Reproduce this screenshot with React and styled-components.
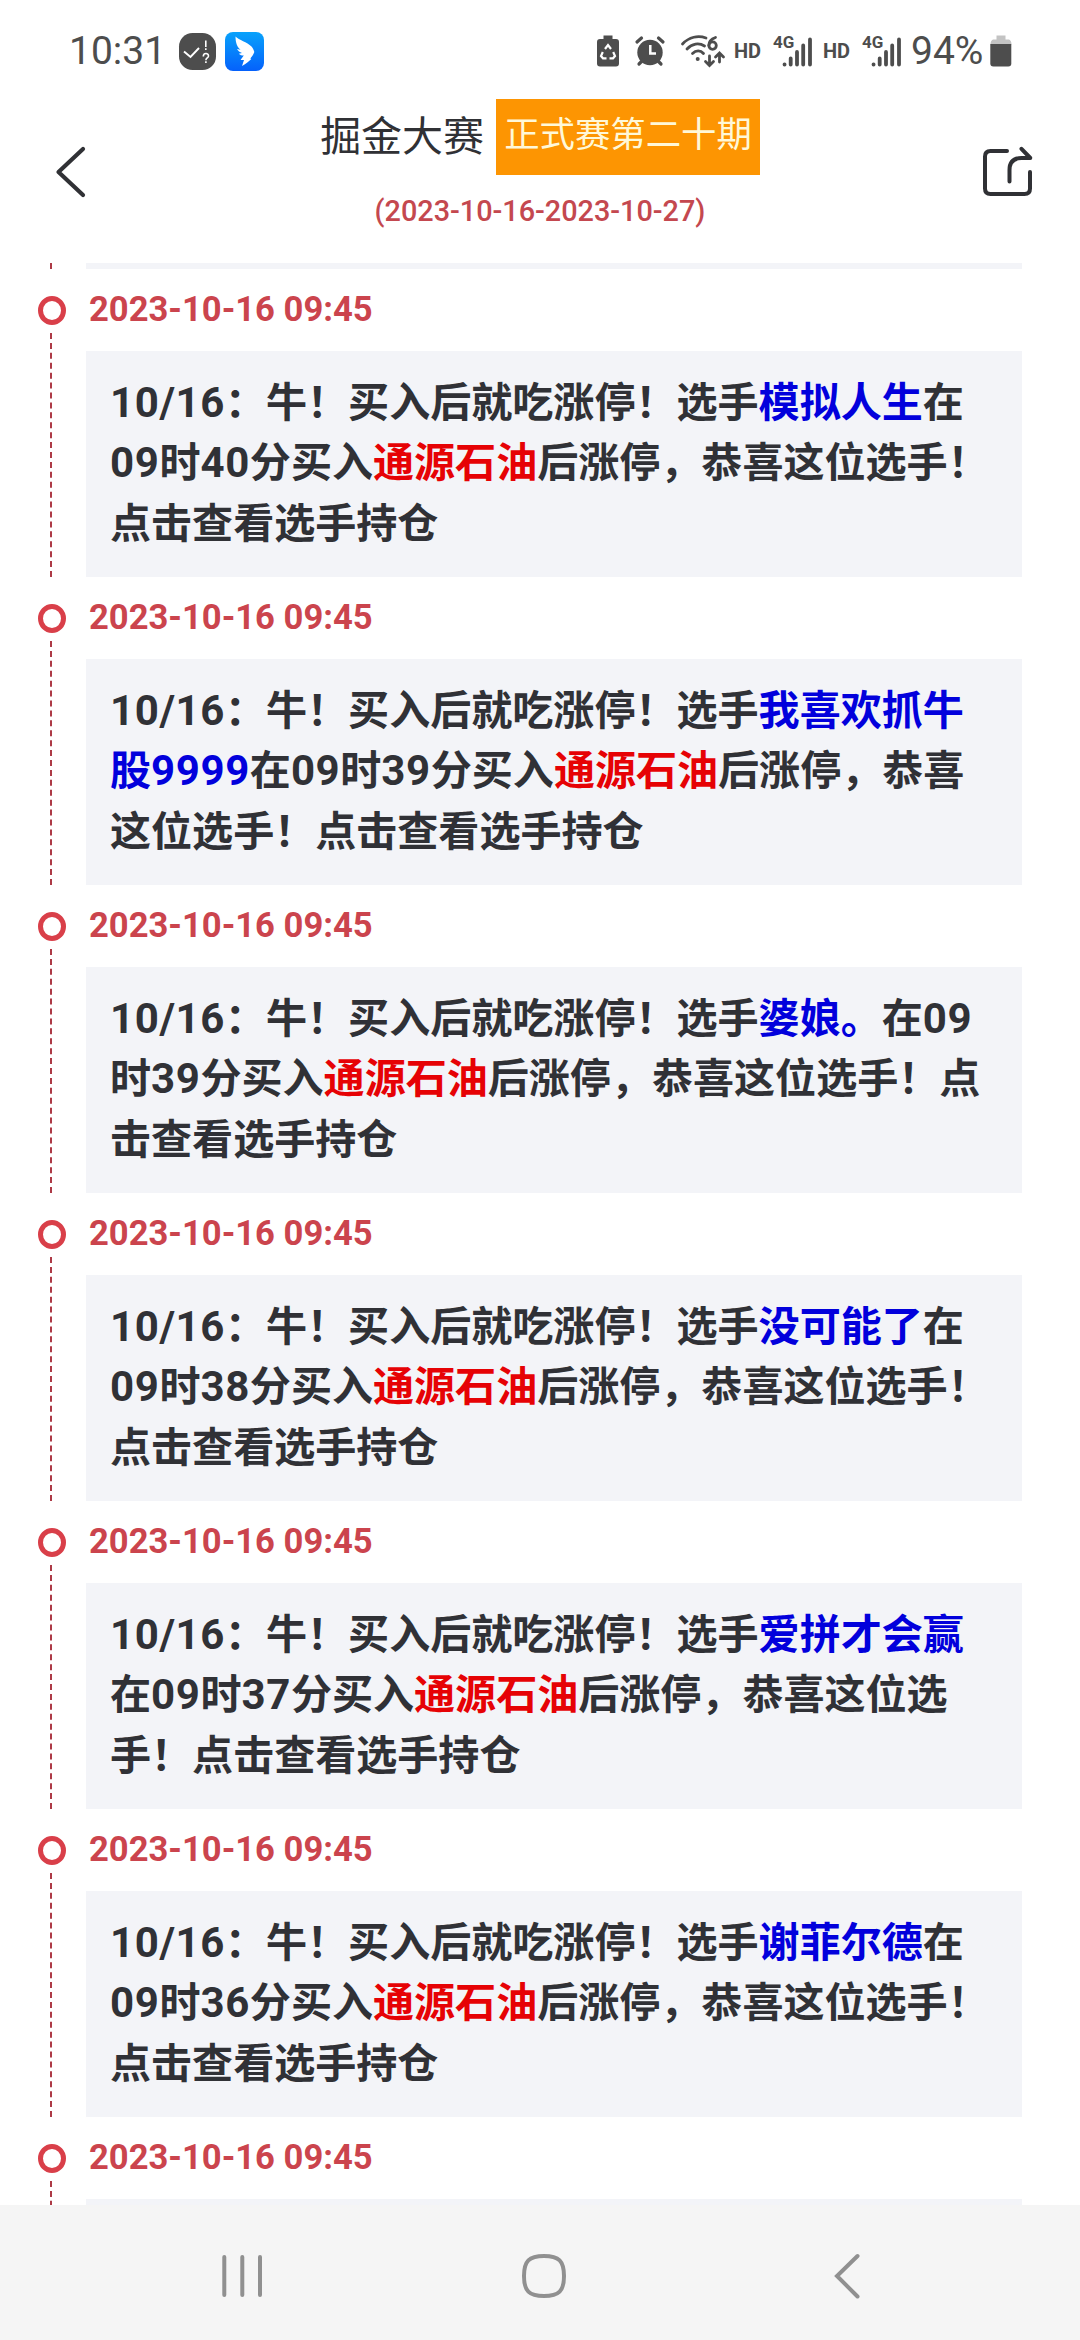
import React from "react";
import styled, { createGlobalStyle } from "styled-components";

const Global = createGlobalStyle`
  * { box-sizing: border-box; }
  body { margin: 0; background: #fff; font-family: Roboto, "Noto Sans CJK SC", sans-serif; }
  svg { overflow: visible; }
`;

const Screen = styled.div`
  width: 1080px;
  height: 2340px;
  display: flex;
  flex-direction: column;
  background: #fff;
  overflow: hidden;
`;

const StatusBar = styled.div`
  height: 99px;
  flex: none;
  display: flex;
  align-items: flex-start;
  justify-content: space-between;
  padding: 31px 68px 0 69px;
  color: #4d4d4d;
`;
const StatusGroup = styled.div`
  display: flex;
  align-items: center;
  height: 40px;
`;
const Spaced = styled.span`
  display: flex;
  flex: none;
  width: ${(p) => p.$w}px;
  margin-left: ${(p) => p.$gap || 0}px;
  white-space: nowrap;
`;
const Clock = styled.span`
  width: 110px;
  font-size: 39px;
  line-height: 40px;
`;
const Percent = styled.span`
  font-size: 39px;
  line-height: 40px;
`;
const Hd = styled.span`
  font-size: 20px;
  line-height: 24px;
  font-weight: 700;
`;
const NetworkTag = styled.span`
  width: 0;
  height: 32px;
  font-size: 17px;
  line-height: 14px;
  font-weight: 700;
`;

const Header = styled.header`
  height: 164px;
  flex: none;
  display: flex;
  justify-content: space-between;
  align-items: flex-start;
  padding: 0 46px;
`;
const IconButton = styled.button`
  display: flex;
  border: 0;
  padding: 0 0 0 ${(p) => p.$inset || 0}px;
  background: none;
  margin-top: ${(p) => p.$top}px;
  width: 54px;
  justify-content: ${(p) => p.$align};
`;
const Heading = styled.div`
  display: flex;
  flex-direction: column;
  align-items: center;
`;
const TitleRow = styled.div`
  display: flex;
  height: 76px;
`;
const Title = styled.h1`
  margin: 0 12px 0 0;
  font-size: 41px;
  font-weight: 400;
  line-height: 76px;
  color: #303135;
`;
const Badge = styled.span`
  height: 76px;
  padding: 0 8px;
  background: #fd9502;
  color: #fff8d8;
  font-size: 35.4px;
  line-height: 73px;
  white-space: nowrap;
`;
const Period = styled.div`
  margin-top: 18px;
  font-size: 28.8px;
  line-height: 36px;
  font-weight: 500;
  color: #c4484f;
`;

const Feed = styled.main`
  flex: 1;
  min-height: 0;
  overflow: hidden;
  display: flex;
  flex-direction: column;
`;
const Entry = styled.article`
  flex: none;
  height: ${(p) => (p.$tail ? 6 : 308)}px;
  display: grid;
  grid-template-columns: 48px 936px;
  padding-left: 38px;
`;
const Rail = styled.div`
  display: flex;
  flex-direction: column;
  align-items: flex-start;
  padding-top: ${(p) => (p.$tail ? 0 : 27)}px;
`;
const Dot = styled.i`
  flex: none;
  width: 28px;
  height: 29px;
  border: 5.5px solid #d93f49;
  border-radius: 50%;
`;
const Dashes = styled.i`
  width: 2px;
  height: ${(p) => (p.$tail ? 6 : 244)}px;
  margin: ${(p) => (p.$tail ? 0 : 8)}px 0 0 12px;
  border-left: 2px dashed #ad3a46;
`;
const Column = styled.div`
  display: flex;
  flex-direction: column;
`;
const Stamp = styled.time`
  height: 82px;
  padding: 19px 0 0 3px;
  font-size: 34.6px;
  line-height: 42px;
  font-weight: 700;
  color: #cb444d;
`;
const Card = styled.div`
  height: ${(p) => (p.$tail ? 6 : 226)}px;
  padding: ${(p) => (p.$tail ? 0 : 22)}px 24px 0;
  background: #f3f4f8;
`;
const Line = styled.p`
  margin: 0;
  height: 60.4px;
  font-size: 41.05px;
  line-height: 60.4px;
  font-weight: 700;
  color: #303136;
  white-space: nowrap;
`;
const Digits = styled.span`
  font-size: 42px;
  line-height: 1;
  letter-spacing: 0.6px;
`;
const Player = styled.span`
  color: #0200dc;
`;
const Stock = styled.span`
  color: #e60205;
`;

const NavBar = styled.nav`
  flex: none;
  height: 135px;
  display: flex;
  justify-content: space-between;
  align-items: center;
  padding: 7px 219px 0 221px;
  background: #f5f5f5;
`;
const HomeSlot = styled.span`
  display: flex;
  margin-right: 8px;
`;

const ReminderIcon = () => (
  <svg width="37" height="37" viewBox="0 0 37 37">
    <rect width="37" height="37" rx="13.5" fill="#4d4d4d" />
    <path d="M5 18.500l6.500 5.500 8.500-9" fill="none" stroke="#fff" strokeWidth="1.9" />
    <path d="M26.800 7.500v6.500M26.800 15.200v1.800M24.300 23.500c0-4 5.200-4 5.200-.5 0 2-2.600 2-2.600 4.200M26.900 28.200v1.800" fill="none" stroke="#fff" strokeWidth="1.6" />
  </svg>
);
const WingIcon = () => (
  <svg width="39" height="39" viewBox="0 0 39 39">
    <defs>
      <linearGradient id="wing" x1="0" y1="0" x2="0" y2="1">
        <stop offset="0" stopColor="#08a2fb" />
        <stop offset="1" stopColor="#0561fb" />
      </linearGradient>
    </defs>
    <rect width="39" height="39" rx="8" fill="url(#wing)" />
    <path d="M10.500 4.500C14 8 22 10 26.500 14.500c1.500 1.700 2 3 2.800 5.500-.8 2.500-2.300 4.500-4 6.500l1 .5c-2.500 2.500-5 4.700-9.300 7l2-6h-3.500l3.300-4.500c-2 0-3.800-.5-5-1.800l3.200-.7c-2.200-.8-4-2-5-4l3.500.8c-2.800-2.300-5-6.300-5-13.300z" fill="#fff" />
  </svg>
);
const SaverIcon = () => (
  <svg width="22" height="32" viewBox="0 0 22 32">
    <path d="M6.500 0.500h9v3.500h3.500q3 0 3 3v21.500q0 3-3 3h-16q-3 0-3-3v-21.500q0-3 3-3h3.500z" fill="#4d4d4d" />
    <path d="M8 14l3-4 3 4M5.800 17l-1.800 4 2 2.300h3.500M16.200 17l1.800 4-2 2.300h-3.500" fill="none" stroke="#fff" strokeWidth="2.200" />
  </svg>
);
const AlarmIcon = () => (
  <svg width="30" height="30" viewBox="0 0 30 30">
    <circle cx="15" cy="16.500" r="12.700" fill="#4d4d4d" />
    <path d="M2 6l4.500-4M28 6l-4.500-4M4 28l4-4M26 28l-4-4" stroke="#4d4d4d" strokeWidth="3.200" strokeLinecap="round" />
    <path d="M15.300 9v8.500h5.700" fill="none" stroke="#fff" strokeWidth="2.500" />
  </svg>
);
const WifiIcon = () => (
  <svg width="44" height="32" viewBox="0 0 44 32" fill="none" stroke="#4d4d4d" strokeWidth="2.800" strokeLinecap="round">
    <path d="M1.500 9C8 2 17 0 25 3M6 14c5-5.500 12-6.500 17.500-3M11.500 18.500c3.500-3.500 8-3.500 11 0" />
    <circle cx="16.700" cy="24" r="2" fill="#4d4d4d" stroke="none" />
    <path d="M28.500 21v9M24.500 26.500l4 4 4-4M38.500 27v-8.500M34.500 22l4-4 4 4" />
    <path d="M34.500 2.500C30 4 27.800 7 27.800 10.500" />
    <circle cx="31.600" cy="10.600" r="3.700" />
  </svg>
);
const SignalIcon = () => (
  <svg width="40" height="32" viewBox="0 0 40 32" stroke="#4d4d4d" strokeWidth="3.800" strokeLinecap="round">
    <path d="M11.500 29.500h.1M17.700 29.500v-6M24 29.500v-12.500M30.200 29.500v-19M37 29.500v-25" />
  </svg>
);
const BatteryIcon = () => (
  <svg width="22" height="32" viewBox="0 0 22 32">
    <path d="M6.500 0.500h9v4h3.500q2.500 1 2.500 5h-21q0-4 2.500-5h3.500z" fill="#c3c3c3" />
    <path d="M0.300 9h21v19.500q0 3-3 3h-15q-3 0-3-3z" fill="#4d4d4d" />
  </svg>
);
const BackIcon = () => (
  <svg width="32" height="52" viewBox="0 0 32 52">
    <path d="M29 3L4.500 26 29 49" fill="none" stroke="#303135" strokeWidth="4.200" strokeLinecap="round" strokeLinejoin="round" />
  </svg>
);
const ShareIcon = () => (
  <svg width="52" height="52" viewBox="0 0 52 52" fill="none" stroke="#303135" strokeWidth="4" strokeLinecap="round" strokeLinejoin="round">
    <path d="M25 5H8.500Q3 5 3 10.500V42.500Q3 48 8.500 48H42.500Q48 48 48 42.500V26" />
    <path d="M27.500 35.500V24Q27.500 12 39.500 12H48.300L39.500 2.800" />
  </svg>
);
const RecentsIcon = () => (
  <svg width="42" height="46" viewBox="0 0 42 46">
    <path d="M3.300 4v38M21.300 4v38M39 4v38" stroke="#909090" strokeWidth="4" strokeLinecap="round" />
  </svg>
);
const HomeIcon = () => (
  <svg width="46" height="46" viewBox="0 0 46 46">
    <path d="M23 3C38 3 43 8 43 23S38 43 23 43 3 38 3 23 8 3 23 3z" fill="none" stroke="#909090" strokeWidth="4" />
  </svg>
);
const NavBackIcon = () => (
  <svg width="28" height="48" viewBox="0 0 28 48">
    <path d="M24.500 4L4 24l20.500 20.500" fill="none" stroke="#909090" strokeWidth="4" strokeLinecap="round" strokeLinejoin="miter" />
  </svg>
);

const lead = <><Digits>10/16</Digits>：牛！买入后就吃涨停！选手</>;
const stock = <Stock>通源石油</Stock>;
const bought = (minute) => <><Digits>09</Digits>时<Digits>{minute}</Digits>分买入</>;
const shortNameEntry = (name, minute) => [
  <>{lead}<Player>{name}</Player>在</>,
  <>{bought(minute)}{stock}后涨停，恭喜这位选手！</>,
  "点击查看选手持仓",
];

const ENTRIES = [
  shortNameEntry("模拟人生", "40"),
  [
    <>{lead}<Player>我喜欢抓牛</Player></>,
    <><Player>股<Digits>9999</Digits></Player>在{bought("39")}{stock}后涨停，恭喜</>,
    "这位选手！点击查看选手持仓",
  ],
  [
    <>{lead}<Player>婆娘。</Player>在<Digits>09</Digits></>,
    <>时<Digits>39</Digits>分买入{stock}后涨停，恭喜这位选手！点</>,
    "击查看选手持仓",
  ],
  shortNameEntry("没可能了", "38"),
  [
    <>{lead}<Player>爱拼才会赢</Player></>,
    <>在{bought("37")}{stock}后涨停，恭喜这位选</>,
    "手！点击查看选手持仓",
  ],
  shortNameEntry("谢菲尔德", "36"),
  [],
];

function MobileSignal() {
  return (
    <Spaced $w={40} $gap={12}>
      <NetworkTag>4G</NetworkTag>
      <SignalIcon />
    </Spaced>
  );
}

function FeedEntry({ lines }) {
  return (
    <Entry>
      <Rail>
        <Dot />
        <Dashes />
      </Rail>
      <Column>
        <Stamp>2023-10-16 09:45</Stamp>
        <Card>
          {lines.map((line, i) => (
            <Line key={i}>{line}</Line>
          ))}
        </Card>
      </Column>
    </Entry>
  );
}

export default function App() {
  return (
    <Screen>
      <Global />
      <StatusBar>
        <StatusGroup>
          <Clock>10:31</Clock>
          <Spaced $w={37}><ReminderIcon /></Spaced>
          <Spaced $w={39} $gap={9}><WingIcon /></Spaced>
        </StatusGroup>
        <StatusGroup>
          <Spaced $w={22}><SaverIcon /></Spaced>
          <Spaced $w={30} $gap={16}><AlarmIcon /></Spaced>
          <Spaced $w={44} $gap={16}><WifiIcon /></Spaced>
          <Spaced $w={27} $gap={9}><Hd>HD</Hd></Spaced>
          <MobileSignal />
          <Spaced $w={27} $gap={10}><Hd>HD</Hd></Spaced>
          <MobileSignal />
          <Spaced $w={71} $gap={9}><Percent>94%</Percent></Spaced>
          <Spaced $w={22} $gap={8}><BatteryIcon /></Spaced>
        </StatusGroup>
      </StatusBar>
      <Header>
        <IconButton $top={47} $align="flex-start" $inset={8} aria-label="返回"><BackIcon /></IconButton>
        <Heading>
          <TitleRow>
            <Title>掘金大赛</Title>
            <Badge>正式赛第二十期</Badge>
          </TitleRow>
          <Period>(2023-10-16-2023-10-27)</Period>
        </Heading>
        <IconButton $top={47} $align="flex-end" aria-label="分享"><ShareIcon /></IconButton>
      </Header>
      <Feed>
        <Entry $tail>
          <Rail $tail><Dashes $tail /></Rail>
          <Column><Card $tail /></Column>
        </Entry>
        {ENTRIES.map((lines, i) => (
          <FeedEntry key={i} lines={lines} />
        ))}
      </Feed>
      <NavBar>
        <RecentsIcon />
        <HomeSlot><HomeIcon /></HomeSlot>
        <NavBackIcon />
      </NavBar>
    </Screen>
  );
}
